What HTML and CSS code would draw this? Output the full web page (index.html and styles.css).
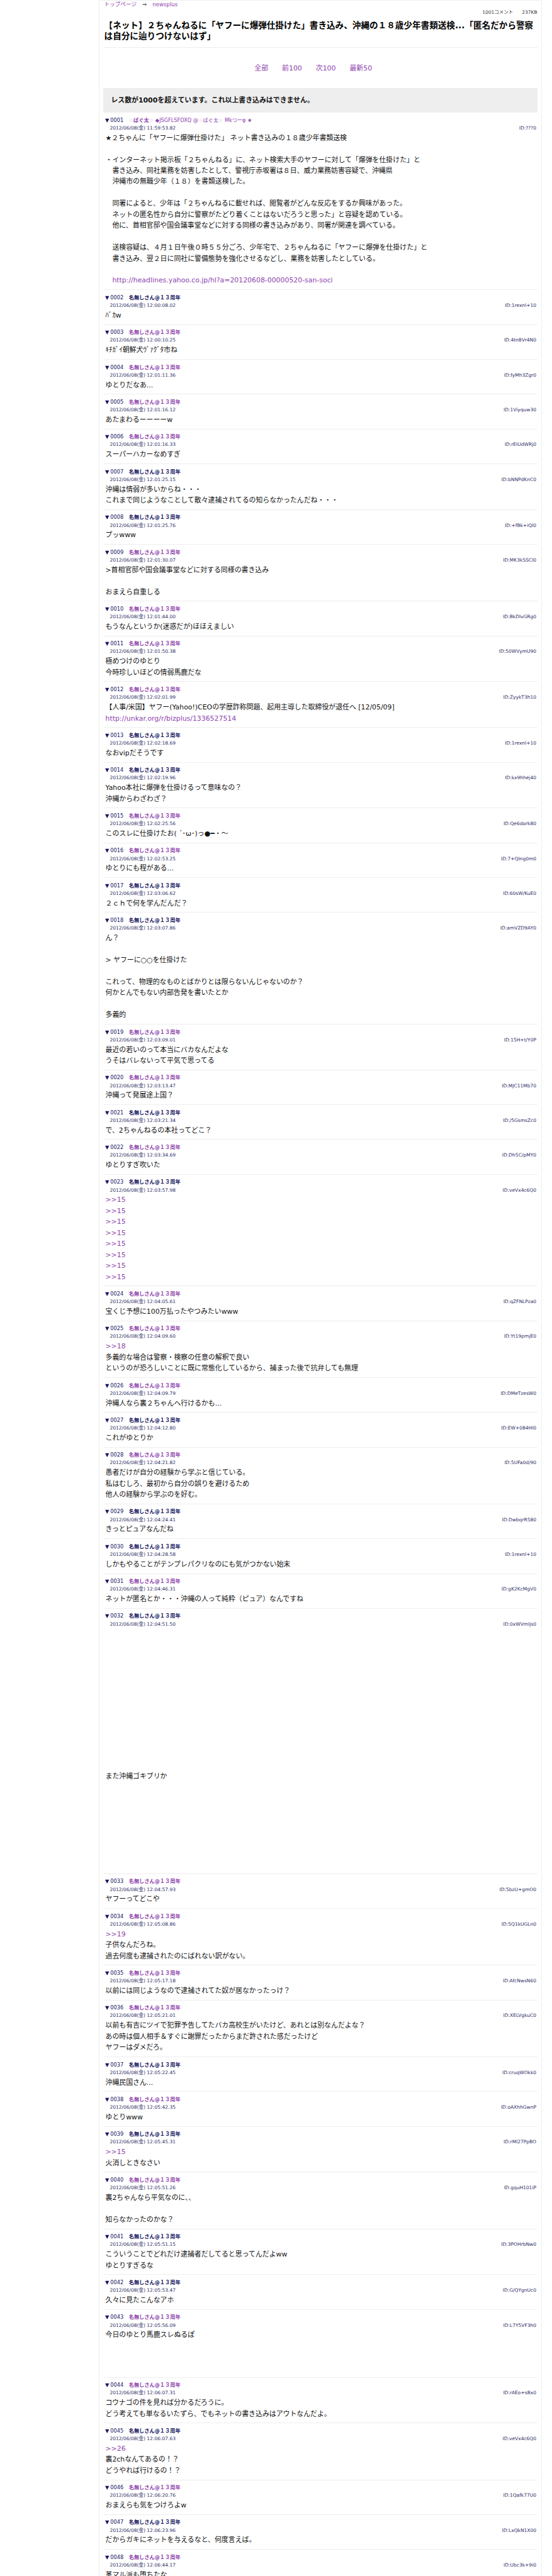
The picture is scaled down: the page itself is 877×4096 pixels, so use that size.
FILE: index.html
```html
<!DOCTYPE html>
<html lang="ja">
<head>
    <meta charset="UTF-8">
    <title>【ネット】2ちゃんねるに「ヤフーに爆弾仕掛けた」書き込み</title>
    <link rel="stylesheet" href="styles.css">
</head>
<body>
<div class="container">
    <div class="crumbs"><a href="#">トップページ</a><span class="arrow">⇒</span><a href="#">newsplus</a></div>
    <div class="meta"><span>1001コメント</span><span>237KB</span></div>
    <h1 class="title">【ネット】２ちゃんねるに「ヤフーに爆弾仕掛けた」書き込み、沖縄の１８歳少年書類送検...「匿名だから警察は自分に辿りつけないはず」</h1>
    <div class="nav"><a href="#">全部</a><a href="#">前100</a><a href="#">次100</a><a href="#">最新50</a></div>
    <div class="notice">レス数が1000を超えています。これ以上書き込みはできません。</div>

    <div class="post">
        <div class="head">▼<span class="num">0001</span><a class="name" href="#"><span class="pale">☆</span>ばぐ太<span class="pale">☆</span> <span class="thin">◆JSGFLSFOXQ @<span class="pale">☆</span>ばぐ太<span class="pale">☆</span> Mkつーφ ★</span></a></div>
        <div class="info"><span>2012/06/08(金) 11:59:53.82</span><span>ID:???0</span></div>
        <div class="body">★２ちゃんに「ヤフーに爆弾仕掛けた」 ネット書き込みの１８歳少年書類送検<br><br>・インターネット掲示板「２ちゃんねる」に、ネット検索大手のヤフーに対して「爆弾を仕掛けた」と<br>　書き込み、同社業務を妨害したとして、警視庁赤坂署は８日、威力業務妨害容疑で、沖縄県<br>　沖縄市の無職少年（１８）を書類送検した。<br><br>　同署によると、少年は「２ちゃんねるに載せれば、閲覧者がどんな反応をするか興味があった。<br>　ネットの匿名性から自分に警察がたどり着くことはないだろうと思った」と容疑を認めている。<br>　他に、首相官邸や国会議事堂などに対する同様の書き込みがあり、同署が関連を調べている。<br><br>　送検容疑は、４月１日午後０時５５分ごろ、少年宅で、２ちゃんねるに「ヤフーに爆弾を仕掛けた」と<br>　書き込み、翌２日に同社に警備態勢を強化させるなどし、業務を妨害したとしている。<br><br>　<a href="#">http://headlines.yahoo.co.jp/hl?a=20120608-00000520-san-soci</a></div>
    </div>
    <div class="post">
        <div class="head">▼<span class="num">0002</span><a class="name seen" href="#">名無しさん@１３周年</a></div>
        <div class="info"><span>2012/06/08(金) 12:00:08.02</span><span>ID:1rexnl+10</span></div>
        <div class="body">ﾊﾞｶw</div>
    </div>
    <div class="post">
        <div class="head">▼<span class="num">0003</span><a class="name" href="#">名無しさん@１３周年</a></div>
        <div class="info"><span>2012/06/08(金) 12:00:10.25</span><span>ID:4tn8Vr4N0</span></div>
        <div class="body">ｷﾁｶﾞｲ朝鮮犬ｳﾞｧｸﾞﾀ市ね</div>
    </div>
    <div class="post">
        <div class="head">▼<span class="num">0004</span><a class="name" href="#">名無しさん@１３周年</a></div>
        <div class="info"><span>2012/06/08(金) 12:01:11.36</span><span>ID:fyMh3Zgr0</span></div>
        <div class="body">ゆとりだなあ...</div>
    </div>
    <div class="post">
        <div class="head">▼<span class="num">0005</span><a class="name" href="#">名無しさん@１３周年</a></div>
        <div class="info"><span>2012/06/08(金) 12:01:16.12</span><span>ID:1Viyquw30</span></div>
        <div class="body">あたまわるーーーーw</div>
    </div>
    <div class="post">
        <div class="head">▼<span class="num">0006</span><a class="name" href="#">名無しさん@１３周年</a></div>
        <div class="info"><span>2012/06/08(金) 12:01:16.33</span><span>ID:rEIUdWRj0</span></div>
        <div class="body">スーパーハカーなめすぎ</div>
    </div>
    <div class="post">
        <div class="head">▼<span class="num">0007</span><a class="name seen" href="#">名無しさん@１３周年</a></div>
        <div class="info"><span>2012/06/08(金) 12:01:25.15</span><span>ID:bNNPdKnC0</span></div>
        <div class="body">沖縄は情弱が多いからね・・・<br>これまで同じようなことして散々逮捕されてるの知らなかったんだね・・・</div>
    </div>
    <div class="post">
        <div class="head">▼<span class="num">0008</span><a class="name seen" href="#">名無しさん@１３周年</a></div>
        <div class="info"><span>2012/06/08(金) 12:01:25.76</span><span>ID:+fBk+iQl0</span></div>
        <div class="body">プッwww</div>
    </div>
    <div class="post">
        <div class="head">▼<span class="num">0009</span><a class="name" href="#">名無しさん@１３周年</a></div>
        <div class="info"><span>2012/06/08(金) 12:01:30.07</span><span>ID:MK3kSSCl0</span></div>
        <div class="body">&gt;首相官邸や国会議事堂などに対する同様の書き込み<br><br>おまえら自重しる</div>
    </div>
    <div class="post">
        <div class="head">▼<span class="num">0010</span><a class="name" href="#">名無しさん@１３周年</a></div>
        <div class="info"><span>2012/06/08(金) 12:01:44.00</span><span>ID:BkDlvGRg0</span></div>
        <div class="body">もうなんというか(迷惑だが)ほほえましい</div>
    </div>
    <div class="post">
        <div class="head">▼<span class="num">0011</span><a class="name" href="#">名無しさん@１３周年</a></div>
        <div class="info"><span>2012/06/08(金) 12:01:50.38</span><span>ID:50WVymU90</span></div>
        <div class="body">極めつけのゆとり<br>今時珍しいほどの情弱馬鹿だな</div>
    </div>
    <div class="post">
        <div class="head">▼<span class="num">0012</span><a class="name" href="#">名無しさん@１３周年</a></div>
        <div class="info"><span>2012/06/08(金) 12:02:01.99</span><span>ID:ZyykT3h10</span></div>
        <div class="body">【人事/米国】ヤフー(Yahoo!)CEOの学歴詐称問題、起用主導した取締役が退任へ [12/05/09]<br><a href="#">http://unkar.org/r/bizplus/1336527514</a></div>
    </div>
    <div class="post">
        <div class="head">▼<span class="num">0013</span><a class="name seen" href="#">名無しさん@１３周年</a></div>
        <div class="info"><span>2012/06/08(金) 12:02:18.69</span><span>ID:1rexnl+10</span></div>
        <div class="body">なおvipだそうです</div>
    </div>
    <div class="post">
        <div class="head">▼<span class="num">0014</span><a class="name seen" href="#">名無しさん@１３周年</a></div>
        <div class="info"><span>2012/06/08(金) 12:02:19.96</span><span>ID:kx9hhej40</span></div>
        <div class="body">Yahoo本社に爆弾を仕掛けるって意味なの？<br>沖縄からわざわざ？</div>
    </div>
    <div class="post">
        <div class="head">▼<span class="num">0015</span><a class="name" href="#">名無しさん@１３周年</a></div>
        <div class="info"><span>2012/06/08(金) 12:02:25.56</span><span>ID:Qe6dork80</span></div>
        <div class="body">このスレに仕掛けたお( ´･ω･)っ●━・～</div>
    </div>
    <div class="post">
        <div class="head">▼<span class="num">0016</span><a class="name" href="#">名無しさん@１３周年</a></div>
        <div class="info"><span>2012/06/08(金) 12:02:53.25</span><span>ID:7+QIng0m0</span></div>
        <div class="body">ゆとりにも程がある...</div>
    </div>
    <div class="post">
        <div class="head">▼<span class="num">0017</span><a class="name seen" href="#">名無しさん@１３周年</a></div>
        <div class="info"><span>2012/06/08(金) 12:03:06.62</span><span>ID:60sW/KuE0</span></div>
        <div class="body">２ｃｈで何を学んだんだ？</div>
    </div>
    <div class="post">
        <div class="head">▼<span class="num">0018</span><a class="name seen" href="#">名無しさん@１３周年</a></div>
        <div class="info"><span>2012/06/08(金) 12:03:07.86</span><span>ID:amVZD9AY0</span></div>
        <div class="body">ん？<br><br>&gt; ヤフーに○○を仕掛けた<br><br>これって、物理的なものとばかりとは限らないんじゃないのか？<br>何かとんでもない内部告発を書いたとか<br><br>多義的</div>
    </div>
    <div class="post">
        <div class="head">▼<span class="num">0019</span><a class="name" href="#">名無しさん@１３周年</a></div>
        <div class="info"><span>2012/06/08(金) 12:03:09.01</span><span>ID:15H+t/Y0P</span></div>
        <div class="body">最近の若いのって本当にバカなんだよな<br>うそはバレないって平気で思ってる</div>
    </div>
    <div class="post">
        <div class="head">▼<span class="num">0020</span><a class="name" href="#">名無しさん@１３周年</a></div>
        <div class="info"><span>2012/06/08(金) 12:03:13.47</span><span>ID:MJC11Mb70</span></div>
        <div class="body">沖縄って発展途上国？</div>
    </div>
    <div class="post">
        <div class="head">▼<span class="num">0021</span><a class="name seen" href="#">名無しさん@１３周年</a></div>
        <div class="info"><span>2012/06/08(金) 12:03:21.34</span><span>ID:/5GsmsZc0</span></div>
        <div class="body">で、2ちゃんねるの本社ってどこ？</div>
    </div>
    <div class="post">
        <div class="head">▼<span class="num">0022</span><a class="name" href="#">名無しさん@１３周年</a></div>
        <div class="info"><span>2012/06/08(金) 12:03:34.69</span><span>ID:Dh5C/pMY0</span></div>
        <div class="body">ゆとりすぎ吹いた</div>
    </div>
    <div class="post">
        <div class="head">▼<span class="num">0023</span><a class="name seen" href="#">名無しさん@１３周年</a></div>
        <div class="info"><span>2012/06/08(金) 12:03:57.98</span><span>ID:veVx4c6Q0</span></div>
        <div class="body"><a href="#">&gt;&gt;15</a><br><a href="#">&gt;&gt;15</a><br><a href="#">&gt;&gt;15</a><br><a href="#">&gt;&gt;15</a><br><a href="#">&gt;&gt;15</a><br><a href="#">&gt;&gt;15</a><br><a href="#">&gt;&gt;15</a><br><a href="#">&gt;&gt;15</a></div>
    </div>
    <div class="post">
        <div class="head">▼<span class="num">0024</span><a class="name" href="#">名無しさん@１３周年</a></div>
        <div class="info"><span>2012/06/08(金) 12:04:05.61</span><span>ID:qZFNLPza0</span></div>
        <div class="body">宝くじ予想に100万払ったやつみたいwww</div>
    </div>
    <div class="post">
        <div class="head">▼<span class="num">0025</span><a class="name" href="#">名無しさん@１３周年</a></div>
        <div class="info"><span>2012/06/08(金) 12:04:09.60</span><span>ID:Yt19pmjE0</span></div>
        <div class="body"><a href="#">&gt;&gt;18</a><br>多義的な場合は警察・検察の任意の解釈で良い<br>というのが恐ろしいことに既に常態化しているから、捕まった後で抗弁しても無理</div>
    </div>
    <div class="post">
        <div class="head">▼<span class="num">0026</span><a class="name" href="#">名無しさん@１３周年</a></div>
        <div class="info"><span>2012/06/08(金) 12:04:09.79</span><span>ID:DMeTzesW0</span></div>
        <div class="body">沖縄人なら裏２ちゃんへ行けるかも...</div>
    </div>
    <div class="post">
        <div class="head">▼<span class="num">0027</span><a class="name seen" href="#">名無しさん@１３周年</a></div>
        <div class="info"><span>2012/06/08(金) 12:04:12.80</span><span>ID:EW+084Hl0</span></div>
        <div class="body">これがゆとりか</div>
    </div>
    <div class="post">
        <div class="head">▼<span class="num">0028</span><a class="name" href="#">名無しさん@１３周年</a></div>
        <div class="info"><span>2012/06/08(金) 12:04:21.82</span><span>ID:5UFa0d/90</span></div>
        <div class="body">愚者だけが自分の経験から学ぶと信じている。<br>私はむしろ、最初から自分の誤りを避けるため<br>他人の経験から学ぶのを好む。</div>
    </div>
    <div class="post">
        <div class="head">▼<span class="num">0029</span><a class="name seen" href="#">名無しさん@１３周年</a></div>
        <div class="info"><span>2012/06/08(金) 12:04:24.41</span><span>ID:DwbqrR580</span></div>
        <div class="body">きっとピュアなんだね</div>
    </div>
    <div class="post">
        <div class="head">▼<span class="num">0030</span><a class="name seen" href="#">名無しさん@１３周年</a></div>
        <div class="info"><span>2012/06/08(金) 12:04:28.58</span><span>ID:1rexnl+10</span></div>
        <div class="body">しかもやることがテンプレパクリなのにも気がつかない始末</div>
    </div>
    <div class="post">
        <div class="head">▼<span class="num">0031</span><a class="name" href="#">名無しさん@１３周年</a></div>
        <div class="info"><span>2012/06/08(金) 12:04:46.31</span><span>ID:gK2KcMgV0</span></div>
        <div class="body">ネットが匿名とか・・・沖縄の人って純粋（ピュア）なんですね</div>
    </div>
    <div class="post">
        <div class="head">▼<span class="num">0032</span><a class="name seen" href="#">名無しさん@１３周年</a></div>
        <div class="info"><span>2012/06/08(金) 12:04:51.50</span><span>ID:0xWVmljs0</span></div>
        <div class="body"><br><br><br><br><br><br><br><br><br><br><br><br><br>また沖縄ゴキブリか<br><br><br><br><br><br><br><br><br></div>
    </div>
    <div class="post">
        <div class="head">▼<span class="num">0033</span><a class="name" href="#">名無しさん@１３周年</a></div>
        <div class="info"><span>2012/06/08(金) 12:04:57.93</span><span>ID:5bzU+gmO0</span></div>
        <div class="body">ヤフーってどこや</div>
    </div>
    <div class="post">
        <div class="head">▼<span class="num">0034</span><a class="name" href="#">名無しさん@１３周年</a></div>
        <div class="info"><span>2012/06/08(金) 12:05:08.86</span><span>ID:5Q1kUGLn0</span></div>
        <div class="body"><a href="#">&gt;&gt;19</a><br>子供なんだろね。<br>過去何度も逮捕されたのにばれない訳がない。</div>
    </div>
    <div class="post">
        <div class="head">▼<span class="num">0035</span><a class="name" href="#">名無しさん@１３周年</a></div>
        <div class="info"><span>2012/06/08(金) 12:05:17.18</span><span>ID:AfcNwsN60</span></div>
        <div class="body">以前には同じようなので逮捕されてた奴が居なかったっけ？</div>
    </div>
    <div class="post">
        <div class="head">▼<span class="num">0036</span><a class="name" href="#">名無しさん@１３周年</a></div>
        <div class="info"><span>2012/06/08(金) 12:05:21.01</span><span>ID:XELVgkuC0</span></div>
        <div class="body">以前も有吉にツイで犯罪予告してたバカ高校生がいたけど、あれとは別なんだよな？<br>あの時は個人相手＆すぐに謝罪だったからまだ許された感だったけど<br>ヤフーはダメだろ。</div>
    </div>
    <div class="post">
        <div class="head">▼<span class="num">0037</span><a class="name seen" href="#">名無しさん@１３周年</a></div>
        <div class="info"><span>2012/06/08(金) 12:05:22.45</span><span>ID:cruqWOkk0</span></div>
        <div class="body">沖縄民国さん...</div>
    </div>
    <div class="post">
        <div class="head">▼<span class="num">0038</span><a class="name" href="#">名無しさん@１３周年</a></div>
        <div class="info"><span>2012/06/08(金) 12:05:42.35</span><span>ID:oAXhhGwnP</span></div>
        <div class="body">ゆとりwww</div>
    </div>
    <div class="post">
        <div class="head">▼<span class="num">0039</span><a class="name seen" href="#">名無しさん@１３周年</a></div>
        <div class="info"><span>2012/06/08(金) 12:05:45.31</span><span>ID:rMl27PpBO</span></div>
        <div class="body"><a href="#">&gt;&gt;15</a><br>火消しときなさい</div>
    </div>
    <div class="post">
        <div class="head">▼<span class="num">0040</span><a class="name" href="#">名無しさん@１３周年</a></div>
        <div class="info"><span>2012/06/08(金) 12:05:51.26</span><span>ID:gquH101iP</span></div>
        <div class="body">裏2ちゃんなら平気なのに、、<br><br>知らなかったのかな？</div>
    </div>
    <div class="post">
        <div class="head">▼<span class="num">0041</span><a class="name seen" href="#">名無しさん@１３周年</a></div>
        <div class="info"><span>2012/06/08(金) 12:05:51.15</span><span>ID:3POHrbNw0</span></div>
        <div class="body">こういうことでどれだけ逮捕者だしてると思ってんだよww<br>ゆとりすぎるな</div>
    </div>
    <div class="post">
        <div class="head">▼<span class="num">0042</span><a class="name seen" href="#">名無しさん@１３周年</a></div>
        <div class="info"><span>2012/06/08(金) 12:05:53.47</span><span>ID:G/QYgnUc0</span></div>
        <div class="body">久々に見たこんなアホ</div>
    </div>
    <div class="post">
        <div class="head">▼<span class="num">0043</span><a class="name" href="#">名無しさん@１３周年</a></div>
        <div class="info"><span>2012/06/08(金) 12:05:56.09</span><span>ID:L7Y5VF3h0</span></div>
        <div class="body">今日のゆとり馬鹿スレぬるぽ<br><br><br><br></div>
    </div>
    <div class="post">
        <div class="head">▼<span class="num">0044</span><a class="name" href="#">名無しさん@１３周年</a></div>
        <div class="info"><span>2012/06/08(金) 12:06:07.31</span><span>ID:rAEo+sBx0</span></div>
        <div class="body">コウナゴの件を見れば分かるだろうに。<br>どう考えても単なるいたずら、でもネットの書き込みはアウトなんだよ。</div>
    </div>
    <div class="post">
        <div class="head">▼<span class="num">0045</span><a class="name seen" href="#">名無しさん@１３周年</a></div>
        <div class="info"><span>2012/06/08(金) 12:06:07.63</span><span>ID:veVx4c6Q0</span></div>
        <div class="body"><a href="#">&gt;&gt;26</a><br>裏2chなんてあるの！？<br>どうやれば行けるの！？</div>
    </div>
    <div class="post">
        <div class="head">▼<span class="num">0046</span><a class="name" href="#">名無しさん@１３周年</a></div>
        <div class="info"><span>2012/06/08(金) 12:06:20.76</span><span>ID:1Qafk77U0</span></div>
        <div class="body">おまえらも気をつけろよw</div>
    </div>
    <div class="post">
        <div class="head">▼<span class="num">0047</span><a class="name seen" href="#">名無しさん@１３周年</a></div>
        <div class="info"><span>2012/06/08(金) 12:06:23.96</span><span>ID:LxQkN1X00</span></div>
        <div class="body">だからガキにネットを与えるなと、何度言えば。</div>
    </div>
    <div class="post">
        <div class="head">▼<span class="num">0048</span><a class="name" href="#">名無しさん@１３周年</a></div>
        <div class="info"><span>2012/06/08(金) 12:06:44.17</span><span>ID:Ubc3k+9i0</span></div>
        <div class="body">革マル派も堕ちたな</div>
    </div>
</div>
</body>
</html>
```

FILE: styles.css
```css
html, body {
    height: 100%;
    overflow: hidden;
}

body {
    margin: 0;
    padding-left: 157px;
    background-color: #fff;
    color: #111;
    font-family: "DejaVu Sans", "Noto Sans CJK JP", sans-serif;
    font-size: 10.9px;
}

a {
    color: #8e44ad;
    text-decoration: none;
}

.container {
    width: 690px;
    padding: 0 6.7px 0 5.7px;
    border: 1px solid #eee;
    border-bottom: none;
    min-height: 100%;
}

.crumbs {
    padding-left: 1.9px;
    font-size: 8.6px;
    line-height: 13px;
}

.crumbs .arrow {
    margin: 0 9px;
    color: #333;
}

.meta {
    display: flex;
    justify-content: flex-end;
    gap: 14px;
    font-size: 7.5px;
    line-height: 12px;
    color: #333;
}

.title {
    margin: 0;
    padding: 5.5px 0 9px 1.9px;
    border-bottom: 1px solid #eee;
    font-size: 13.6px;
    line-height: 17px;
    color: #000;
}

.nav {
    padding: 24px 0 23.5px;
    text-align: center;
    line-height: 17px;
}

.nav a {
    margin-right: 22px;
}

.notice {
    padding: 11px 12.7px;
    background-color: #eee;
    font-weight: bold;
    line-height: 17px;
    color: #111;
}

.post {
    padding-bottom: 5.3px;
    border-bottom: 1px solid #eee;
}

.head {
    padding: 4.6px 0 0 3.3px;
    font-size: 8.2px;
    line-height: 14.2px;
    color: #14145e;
}

.num {
    margin: 0 8.6px 0 2px;
}

.name {
    font-weight: bold;
}

.name .thin {
    font-weight: normal;
}

.name .pale {
    font-weight: normal;
    color: #cdbad8;
}

.name.seen {
    color: #14145e;
}

.info {
    display: flex;
    justify-content: space-between;
    padding: 0 1.7px 0 10.7px;
    font-size: 7.5px;
    line-height: 12.8px;
    color: #2e2e66;
}

.body {
    padding-left: 3.8px;
    line-height: 17.46px;
}
```
